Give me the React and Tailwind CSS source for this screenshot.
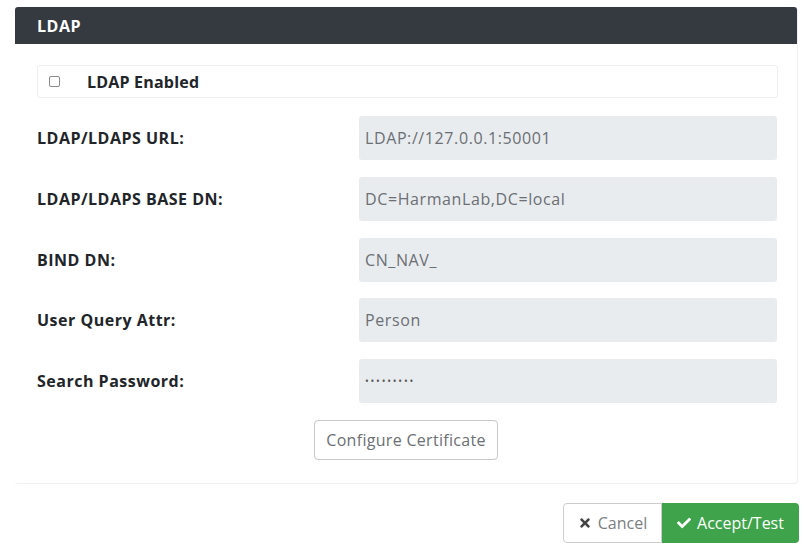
import React from 'react';
import { FaTimes, FaCheck } from 'react-icons/fa';

const fields = [
  { label: 'LDAP/LDAPS URL:', value: 'LDAP://127.0.0.1:50001' },
  { label: 'LDAP/LDAPS BASE DN:', value: 'DC=HarmanLab,DC=local' },
  { label: 'BIND DN:', value: 'CN_NAV_' },
  { label: 'User Query Attr:', value: 'Person' },
  { label: 'Search Password:', value: '•••••••••', password: true },
];

const FieldRow = ({ label, value, password }) => (
  <div className="flex items-center h-[44px]">
    <label className="w-[322px] shrink-0 text-[16px] tracking-[0.5px] font-bold text-[#212529]">{label}</label>
    <div className="w-[418px] h-full bg-[#e9ecef] rounded-[3px] flex items-center pl-[6px] text-[16px] tracking-[0.6px] text-[#6b6f73]">
      {password ? <span className="text-[10px] tracking-[1.8px] text-[#555]">{value}</span> : value}
    </div>
  </div>
);

export default function App() {
  return (
    <div className="w-[804px] h-[546px] bg-white overflow-hidden" style={{ fontFamily: '"Open Sans", "Liberation Sans", sans-serif' }}>
      {/* Card */}
      <div className="ml-[15px] mt-[7px] w-[783px] border-r border-b border-[#f0f0f0] rounded-[3px]">
        <div className="h-[37px] bg-[#343a40] rounded-t-[3px] flex items-center px-[22px]">
          <span className="text-white text-[16px] tracking-[0.5px] font-bold">LDAP</span>
        </div>

        <div className="pl-[22px] pr-[19px] pt-[21px] pb-[23px]">
          {/* Enabled toggle */}
          <div className="h-[33px] border border-[#eeeeee] rounded-[3px] flex items-center pl-[11px]">
            <span className="w-[11px] h-[11px] border border-[#8a8a8a] rounded-[2px] bg-white" />
            <span className="ml-[27px] text-[16px] tracking-[0.2px] font-bold text-[#212529]">LDAP Enabled</span>
          </div>

          <div className="mt-[18px] flex flex-col gap-[16.75px]">
            {fields.map((f) => (
              <FieldRow key={f.label} {...f} />
            ))}
          </div>

          <div className="mt-[17px] flex justify-center pr-[3px]">
            <button className="w-[184px] h-[40px] border border-[#c8c8c8] rounded-[4px] bg-white text-[16px] tracking-[0.3px] text-[#6b6f73]">
              Configure Certificate
            </button>
          </div>
        </div>
      </div>

      {/* Footer actions */}
      <div className="flex justify-end pr-[5px] mt-[19px]">
        <div className="flex h-[40px]">
          <button className="w-[99px] flex items-center justify-center gap-[6px] border border-[#cccccc] rounded-l-[4px] bg-white text-[16px] text-[#7a7e82]">
            <FaTimes className="w-[14px] h-[14px] text-[#444]" />
            Cancel
          </button>
          <button className="w-[137px] flex items-center justify-center gap-[6px] rounded-r-[4px] bg-[#3ea34a] text-[16px] text-white">
            <FaCheck className="w-[14px] h-[14px]" />
            Accept/Test
          </button>
        </div>
      </div>
    </div>
  );
}
